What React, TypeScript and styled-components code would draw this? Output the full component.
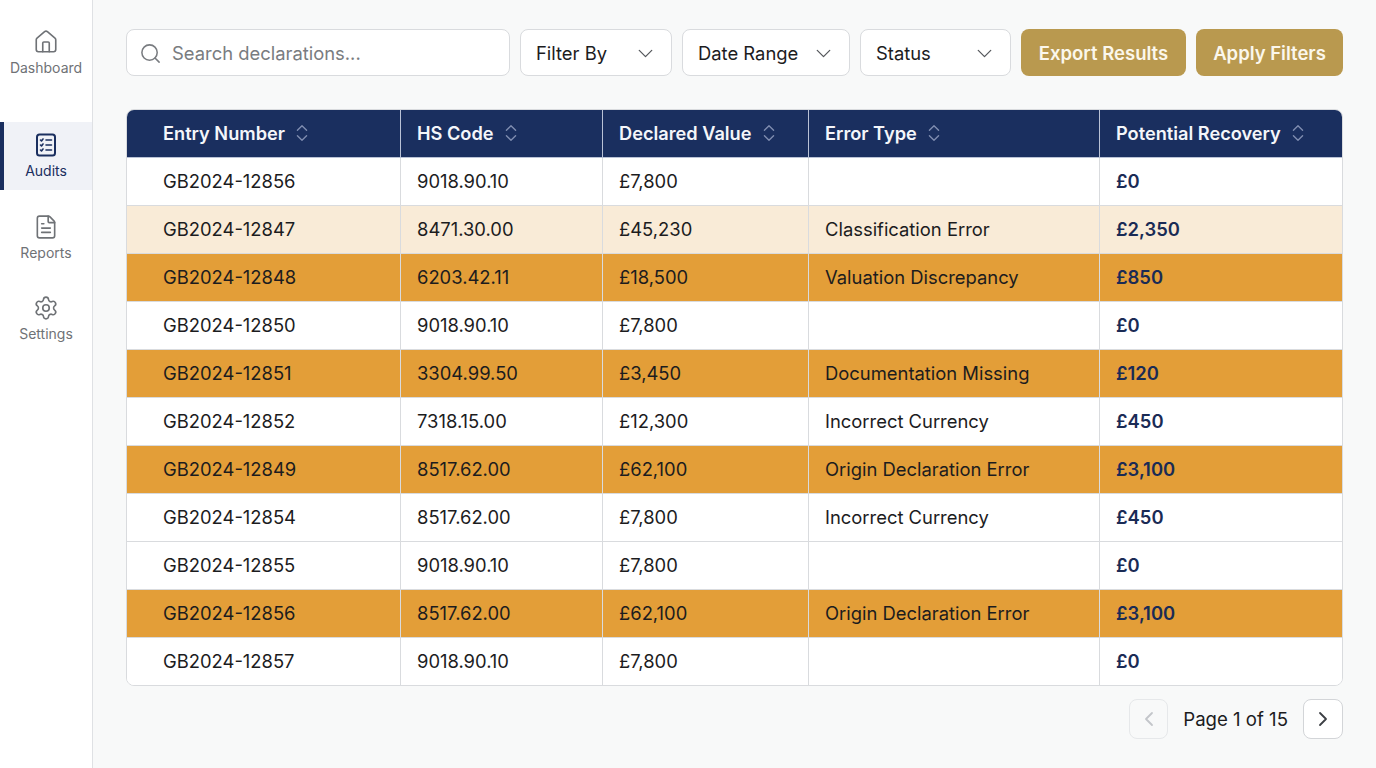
import styled, { createGlobalStyle } from "styled-components";
import {
  ChevronDown,
  ChevronLeft,
  ChevronRight,
  ChevronsUpDown,
  FileText,
  House,
  Search,
  Settings,
} from "lucide-react";

const GlobalStyle = createGlobalStyle`
  html, body {
    margin: 0;
    height: 100%;
    background: #f8f9f9;
    font-family: Inter, "Liberation Sans", sans-serif;
    color: #1c1c1e;
  }
  * {
    box-sizing: border-box;
  }
`;

const Page = styled.div`
  display: flex;
  width: 100%;
  height: 768px;
  overflow: hidden;
`;

const Sidebar = styled.nav`
  display: flex;
  flex-direction: column;
  flex: 0 0 93px;
  padding-top: 19px;
  gap: 13.5px;
  background: #fff;
  border-right: 1px solid #dfe1e4;
`;

const NavItem = styled.a<{ $active?: boolean; $gapAfter?: boolean }>`
  display: flex;
  flex-direction: column;
  align-items: center;
  justify-content: flex-start;
  height: 68px;
  padding-top: 10px;
  margin-bottom: ${(p) => (p.$gapAfter ? "21.5px" : "0")};
  gap: 4px;
  font-size: 14px;
  line-height: 17px;
  color: ${(p) => (p.$active ? "#1a2f5f" : "#6f7276")};
  background: ${(p) => (p.$active ? "#f0f2f7" : "transparent")};
  border-left: 4px solid ${(p) => (p.$active ? "#1a2f5f" : "transparent")};
  padding-right: 4px;
  svg {
    display: block;
  }
`;

const Main = styled.main`
  flex: 1;
  display: flex;
  flex-direction: column;
  padding: 29px 33px 0;
`;

const Toolbar = styled.div`
  display: flex;
  gap: 10px;
  height: 47px;
  margin-bottom: 33px;
`;

const SearchBox = styled.label`
  flex: 0 0 384px;
  display: flex;
  align-items: center;
  gap: 10px;
  padding: 1px 12px 0;
  font-size: 18.4px;
  color: #797c80;
  background: #fff;
  border: 1px solid #d9dbde;
  border-radius: 8px;
`;

const Select = styled.div<{ $width: number }>`
  flex: 0 0 ${(p) => p.$width}px;
  display: flex;
  align-items: center;
  justify-content: space-between;
  padding: 1px 13px 0 15px;
  font-size: 18.4px;
  background: #fff;
  border: 1px solid #d9dbde;
  border-radius: 8px;
  svg {
    color: #55585c;
  }
`;

const ActionButton = styled.button<{ $width: number }>`
  flex: 0 0 ${(p) => p.$width}px;
  font: 600 18.5px Inter, sans-serif;
  color: #fbf7ec;
  background: #b9994f;
  border: 0;
  border-radius: 8px;
  padding: 0;
`;

const TableWrap = styled.div`
  width: 1217px;
  border: 1px solid #d9dbde;
  border-radius: 8px;
  overflow: hidden;
  background: #fff;
`;

const Table = styled.table`
  width: 100%;
  border-collapse: separate;
  border-spacing: 0;
  table-layout: fixed;
  font-size: 18.4px;
`;

const HeadRow = styled.tr`
  height: 48px;
  background: #1a2f5f;
`;

const HeadCell = styled.th<{ $first?: boolean }>`
  padding: 0 0 1px ${(p) => (p.$first ? "36px" : "16px")};
  font-size: 18.2px;
  font-weight: 600;
  text-align: left;
  color: #f4f6fa;
  border-left: ${(p) => (p.$first ? "0" : "1px solid #b9c2d6")};
  border-bottom: 1px solid #b9c2d6;
`;

const HeadInner = styled.span`
  display: inline-flex;
  align-items: center;
  gap: 6px;
  svg {
    color: #7f8db0;
  }
`;

const Row = styled.tr<{ $tone: Tone; $last?: boolean }>`
  height: ${(p) => (p.$last ? "47px" : "48px")};
  background: ${(p) =>
    p.$tone === "high" ? "#e39e38" : p.$tone === "soft" ? "#f9ebd7" : "#fff"};
`;

const Cell = styled.td<{ $first?: boolean; $last?: boolean }>`
  padding: 0 0 2px ${(p) => (p.$first ? "36px" : "16px")};
  border-left: ${(p) => (p.$first ? "0" : "1px solid #d9dbde")};
  border-bottom: ${(p) => (p.$last ? "0" : "1px solid #d9dbde")};
  white-space: nowrap;
`;

const Recovery = styled.span`
  font-weight: 600;
  color: #1a2b55;
`;

const Pager = styled.div`
  display: flex;
  justify-content: flex-end;
  align-items: center;
  gap: 15px;
  margin-top: 13px;
  font-size: 18.6px;
`;

const PageButton = styled.button<{ $disabled?: boolean }>`
  display: flex;
  align-items: center;
  justify-content: center;
  width: ${(p) => (p.$disabled ? "39px" : "40px")};
  height: 40px;
  padding: 0;
  color: ${(p) => (p.$disabled ? "#c3c6ca" : "#3c3f44")};
  background: ${(p) => (p.$disabled ? "transparent" : "#fff")};
  border: 1px solid ${(p) => (p.$disabled ? "#e6e8ea" : "#d3d5d8")};
  border-radius: 8px;
`;

type Tone = "plain" | "soft" | "high";

const columns = [
  { label: "Entry Number", width: 273 },
  { label: "HS Code", width: 202 },
  { label: "Declared Value", width: 206 },
  { label: "Error Type", width: 291 },
  { label: "Potential Recovery", width: 243 },
];

const rows: { entry: string; hs: string; value: string; error: string; recovery: string; tone: Tone }[] = [
  { entry: "GB2024-12856", hs: "9018.90.10", value: "£7,800", error: "", recovery: "£0", tone: "plain" },
  { entry: "GB2024-12847", hs: "8471.30.00", value: "£45,230", error: "Classification Error", recovery: "£2,350", tone: "soft" },
  { entry: "GB2024-12848", hs: "6203.42.11", value: "£18,500", error: "Valuation Discrepancy", recovery: "£850", tone: "high" },
  { entry: "GB2024-12850", hs: "9018.90.10", value: "£7,800", error: "", recovery: "£0", tone: "plain" },
  { entry: "GB2024-12851", hs: "3304.99.50", value: "£3,450", error: "Documentation Missing", recovery: "£120", tone: "high" },
  { entry: "GB2024-12852", hs: "7318.15.00", value: "£12,300", error: "Incorrect Currency", recovery: "£450", tone: "plain" },
  { entry: "GB2024-12849", hs: "8517.62.00", value: "£62,100", error: "Origin Declaration Error", recovery: "£3,100", tone: "high" },
  { entry: "GB2024-12854", hs: "8517.62.00", value: "£7,800", error: "Incorrect Currency", recovery: "£450", tone: "plain" },
  { entry: "GB2024-12855", hs: "9018.90.10", value: "£7,800", error: "", recovery: "£0", tone: "plain" },
  { entry: "GB2024-12856", hs: "8517.62.00", value: "£62,100", error: "Origin Declaration Error", recovery: "£3,100", tone: "high" },
  { entry: "GB2024-12857", hs: "9018.90.10", value: "£7,800", error: "", recovery: "£0", tone: "plain" },
];

function AuditIcon() {
  return (
    <svg width="26" height="26" viewBox="0 0 26 26" fill="none" stroke="currentColor" strokeWidth="2" strokeLinecap="round" strokeLinejoin="round">
      <rect x="4" y="2.5" width="18" height="21" rx="2.5" />
      <path d="M7.5 8l1 1 1.5-2M13 8h5.5M7.5 13l1 1 1.5-2M13 13h5.5M7.5 18l1 1 1.5-2M13 18h5.5" strokeWidth="1.6" />
    </svg>
  );
}

export default function App() {
  return (
    <Page>
      <GlobalStyle />
      <Sidebar>
        <NavItem $gapAfter>
          <House size={26} strokeWidth={1.5} />
          Dashboard
        </NavItem>
        <NavItem $active>
          <AuditIcon />
          Audits
        </NavItem>
        <NavItem>
          <FileText size={26} strokeWidth={1.5} />
          Reports
        </NavItem>
        <NavItem>
          <Settings size={26} strokeWidth={1.5} />
          Settings
        </NavItem>
      </Sidebar>
      <Main>
        <Toolbar>
          <SearchBox>
            <Search size={23} strokeWidth={1.6} />
            Search declarations...
          </SearchBox>
          <Select $width={152}>
            Filter By
            <ChevronDown size={25} strokeWidth={1.2} />
          </Select>
          <Select $width={168}>
            Date Range
            <ChevronDown size={25} strokeWidth={1.2} />
          </Select>
          <Select $width={151}>
            Status
            <ChevronDown size={25} strokeWidth={1.2} />
          </Select>
          <ActionButton $width={165}>Export Results</ActionButton>
          <ActionButton $width={147}>Apply Filters</ActionButton>
        </Toolbar>
        <TableWrap>
          <Table>
            <colgroup>
              {columns.map((c) => (
                <col key={c.label} style={{ width: c.width }} />
              ))}
            </colgroup>
            <thead>
              <HeadRow>
                {columns.map((c, i) => (
                  <HeadCell key={c.label} $first={i === 0}>
                    <HeadInner>
                      {c.label}
                      <ChevronsUpDown size={22} strokeWidth={1.5} />
                    </HeadInner>
                  </HeadCell>
                ))}
              </HeadRow>
            </thead>
            <tbody>
              {rows.map((r, i) => {
                const last = i === rows.length - 1;
                return (
                  <Row key={i} $tone={r.tone} $last={last}>
                    <Cell $first $last={last}>{r.entry}</Cell>
                    <Cell $last={last}>{r.hs}</Cell>
                    <Cell $last={last}>{r.value}</Cell>
                    <Cell $last={last}>{r.error}</Cell>
                    <Cell $last={last}>
                      <Recovery>{r.recovery}</Recovery>
                    </Cell>
                  </Row>
                );
              })}
            </tbody>
          </Table>
        </TableWrap>
        <Pager>
          <PageButton $disabled>
            <ChevronLeft size={24} strokeWidth={1.8} />
          </PageButton>
          Page 1 of 15
          <PageButton>
            <ChevronRight size={24} strokeWidth={1.8} />
          </PageButton>
        </Pager>
      </Main>
    </Page>
  );
}
